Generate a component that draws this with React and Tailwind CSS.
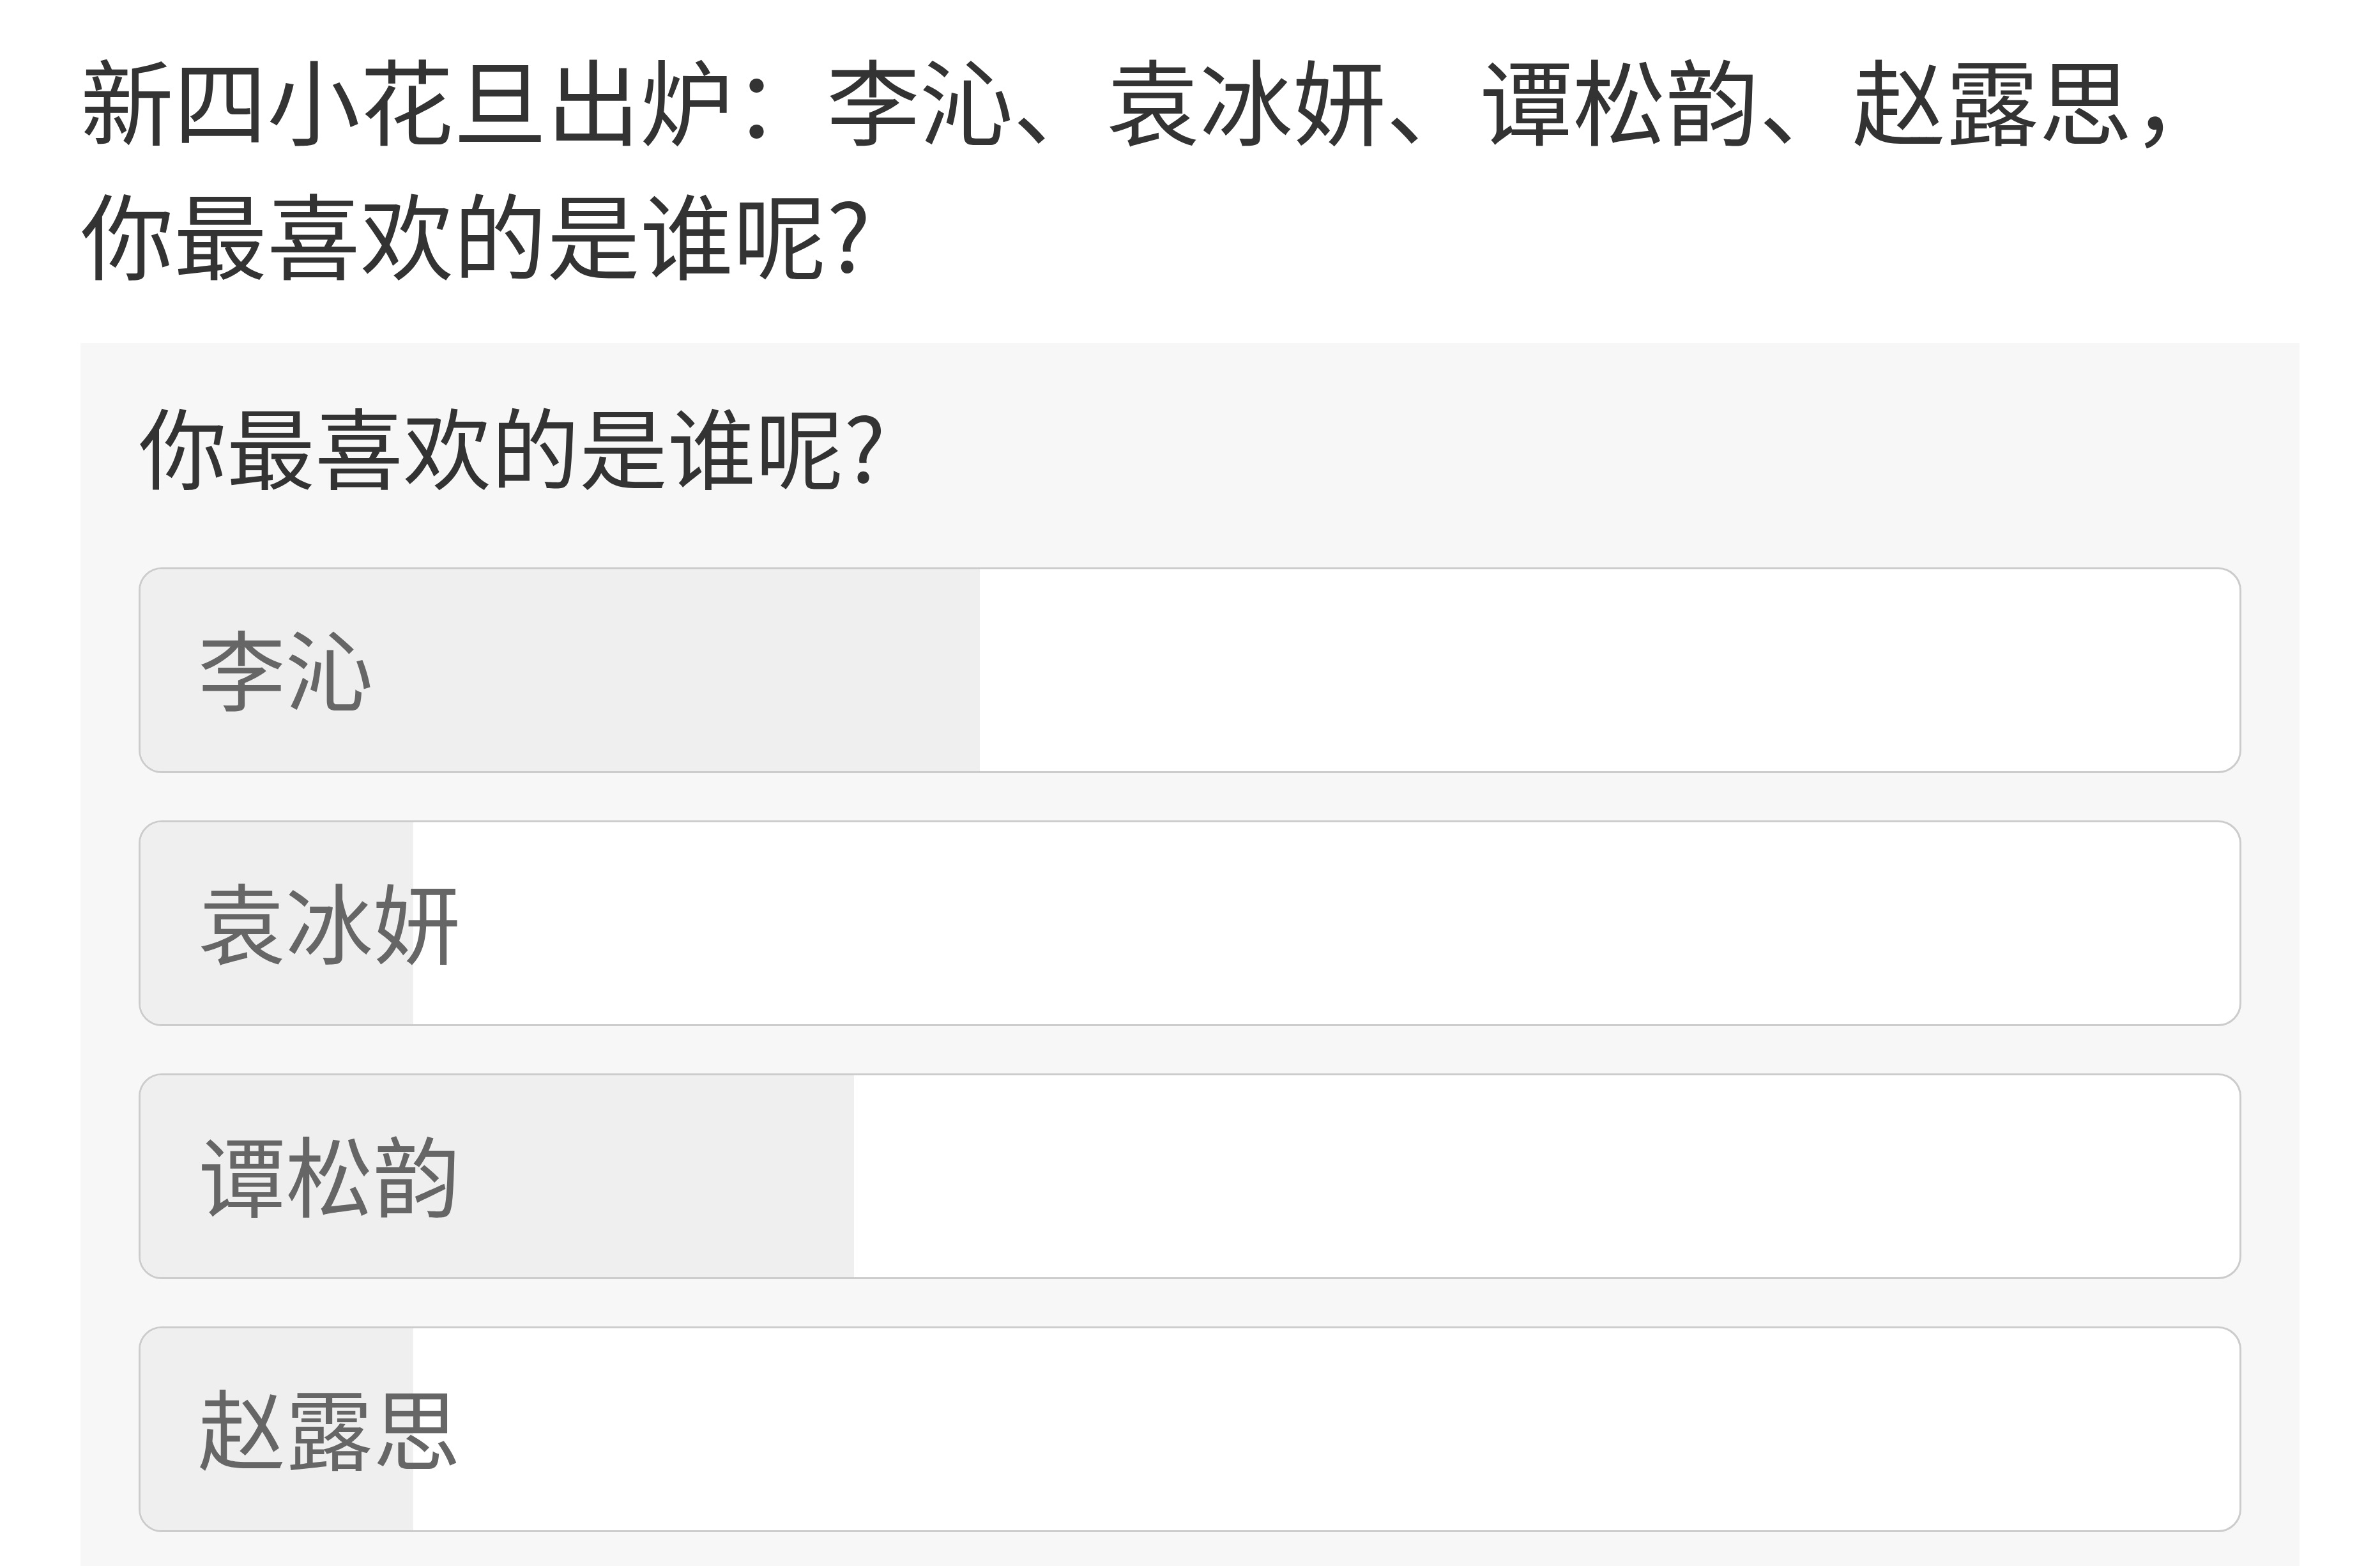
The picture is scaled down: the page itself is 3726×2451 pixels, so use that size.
import React from "react";

const options = [
  { name: "李沁", pct: 40 },
  { name: "袁冰妍", pct: 13 },
  { name: "谭松韵", pct: 34 },
  { name: "赵露思", pct: 13 },
];

export default function App() {
  return (
    <div
      className="min-h-[2451px] bg-white px-[126px] pt-[48px]"
      style={{ fontFamily: '"Noto Sans CJK SC", "Noto Sans", sans-serif' }}
    >
      <h1 className="text-[146px] leading-[210px] font-normal text-[#333333]">
        新四小花旦出炉：李沁、袁冰妍、谭松韵、赵露思，你最喜欢的是谁呢?
      </h1>
      <div className="mt-[69px] bg-[#f7f7f7] px-[91px] pt-[58px] pb-[60px]">
        <div className="text-[138px] leading-[200px] text-[#333333]">你最喜欢的是谁呢?</div>
        <div className="mt-[93px] flex flex-col gap-[74px]">
          {options.map((o) => (
            <div
              key={o.name}
              className="relative h-[322px] overflow-hidden rounded-[36px] border-[3px] border-[#cccccc] bg-white"
            >
              <div
                className="absolute inset-y-0 left-0 bg-[#efefef]"
                style={{ width: `${o.pct}%` }}
              />
              <div className="relative flex h-full items-center pb-[12px] pl-[90px] text-[137px] leading-none text-[#666666]">
                {o.name}
              </div>
            </div>
          ))}
        </div>
      </div>
    </div>
  );
}
